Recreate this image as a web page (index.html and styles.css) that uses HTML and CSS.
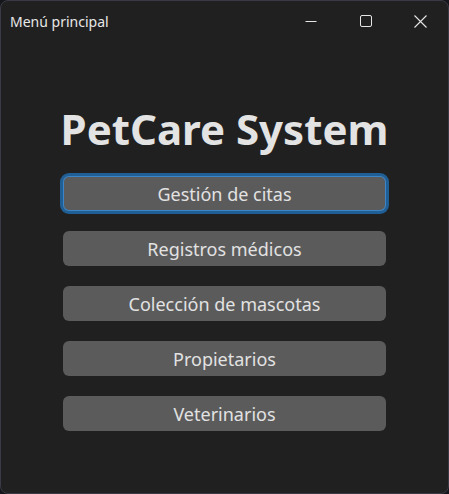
FILE: index.html
```html
<!DOCTYPE html>
<html lang="es">
<head>
<meta charset="utf-8">
<title>Menú principal</title>
<link rel="stylesheet" href="styles.css">
</head>
<body>
<div class="window">
  <header class="titlebar">
    <span class="title">Menú principal</span>
    <div class="controls">
      <span class="ctl">
        <svg width="12" height="12" viewBox="0 0 12 12"><path d="M0.5 6.5H11.5" stroke="#e6e6e6" stroke-width="1"/></svg>
      </span>
      <span class="ctl">
        <svg width="12" height="12" viewBox="0 0 12 12"><rect x="0.5" y="0.5" width="11" height="11" rx="1.5" fill="none" stroke="#e6e6e6" stroke-width="1"/></svg>
      </span>
      <span class="ctl">
        <svg width="13" height="13" viewBox="0 0 13 13"><path d="M0.5 0.5L12.5 12.5M12.5 0.5L0.5 12.5" stroke="#e6e6e6" stroke-width="1.1"/></svg>
      </span>
    </div>
  </header>
  <main class="content">
    <h1 class="heading">PetCare System</h1>
    <nav class="menu">
      <button class="btn focused">Gestión de citas</button>
      <button class="btn">Registros médicos</button>
      <button class="btn">Colección de mascotas</button>
      <button class="btn">Propietarios</button>
      <button class="btn">Veterinarios</button>
    </nav>
  </main>
</div>
</body>
</html>
```
FILE: styles.css
```css
html, body {
  margin: 0;
  padding: 0;
  background: #15151c;
  width: 449px;
  height: 494px;
  overflow: hidden;
}

.window {
  box-sizing: border-box;
  width: 449px;
  height: 494px;
  background: #202020;
  border: 1px solid #3a3a46;
  border-radius: 8px;
  display: flex;
  flex-direction: column;
  font-family: "Noto Sans", "Open Sans", sans-serif;
  color: #e4e4e4;
}

.titlebar {
  height: 40px;
  display: flex;
  align-items: center;
  justify-content: space-between;
  padding-left: 9px;
}

.title {
  font-size: 14px;
  color: #e8e8e8;
}

.controls {
  display: flex;
  height: 100%;
}

.ctl {
  width: 55px;
  height: 100%;
  display: flex;
  align-items: center;
  justify-content: center;
}

.content {
  display: flex;
  flex-direction: column;
  align-items: center;
  padding-top: 62px;
}

.heading {
  margin: 0;
  font-size: 42px;
  font-weight: 700;
  line-height: 52px;
  color: #e3e3e3;
  letter-spacing: 0;
}

.menu {
  margin-top: 21px;
  display: flex;
  flex-direction: column;
  gap: 20px;
}

.btn {
  width: 323px;
  height: 35px;
  border: none;
  border-radius: 6px;
  background: #5b5b5b;
  color: #e2e2e2;
  font-family: "Noto Sans", "Open Sans", sans-serif;
  font-size: 18px;
  padding: 0;
}

.btn.focused {
  box-shadow: 0 0 0 1px #3a86c8 inset, 0 0 0 3px #1f5f96;
}
```
